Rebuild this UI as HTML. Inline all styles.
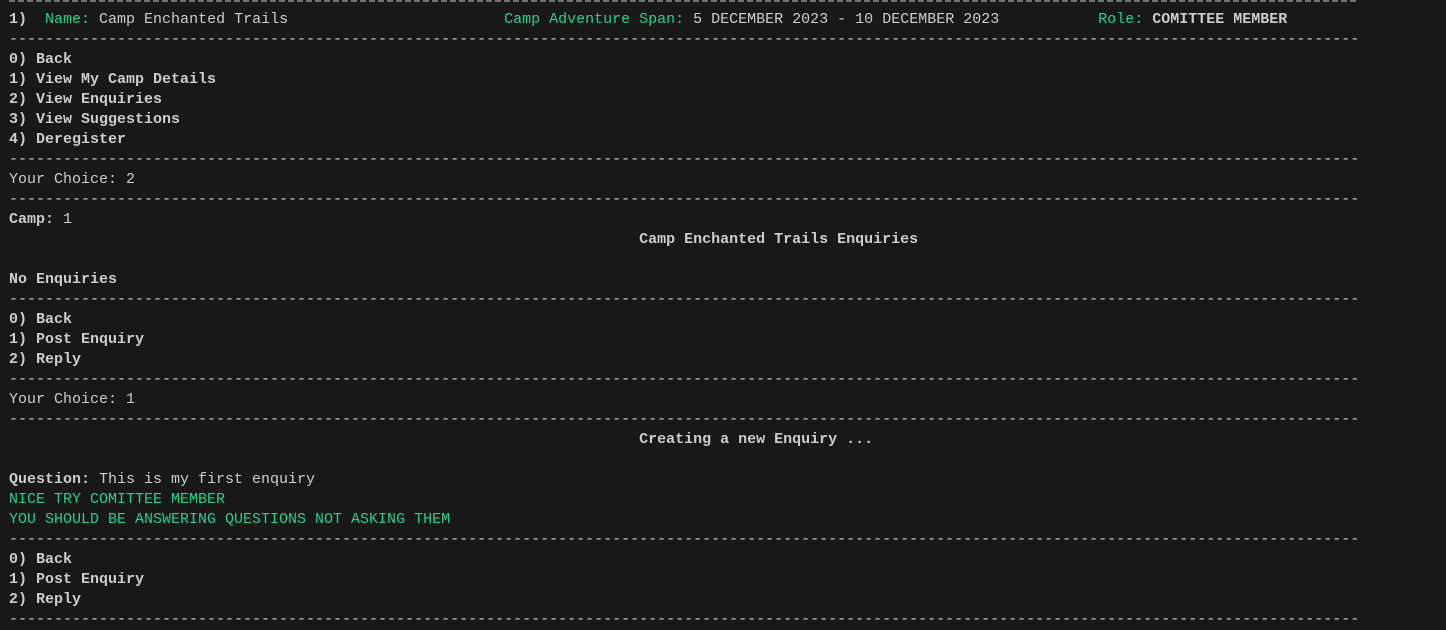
<!DOCTYPE html><html><head><style>
body{margin:0;background:#181818;width:1446px;height:627px;overflow:hidden;}
pre{margin:0;position:absolute;left:9px;top:-10px;font:15px/20px "Liberation Mono",monospace;color:#cccccc;}
b{font-weight:bold}.g{color:#23d18b}
.t{position:absolute;left:9px;top:0;height:2px;width:1349px;background:repeating-linear-gradient(90deg,#aaa 0 6px,transparent 6px 9px);opacity:.6}
</style></head><body><div class="t"></div><pre></pre>
<script>
var D='-'.repeat(150);
var line1='<b>1)</b>  <span class="g">Name:</span> Camp Enchanted Trails'+' '.repeat(55-'1)  Name: Camp Enchanted Trails'.length)
+'<span class="g">Camp Adventure Span:</span> 5 DECEMBER 2023 - 10 DECEMBER 2023';
var used=55+'Camp Adventure Span: 5 DECEMBER 2023 - 10 DECEMBER 2023'.length;
line1+=' '.repeat(121-used)+'<span class="g">Role:</span> <b>COMITTEE MEMBER</b>';
var L=['',line1,D,'<b>0) Back</b>','<b>1) View My Camp Details</b>','<b>2) View Enquiries</b>','<b>3) View Suggestions</b>','<b>4) Deregister</b>',D,'Your Choice: 2',D,'<b>Camp:</b> 1',' '.repeat(70)+'<b>Camp Enchanted Trails Enquiries</b>','','<b>No Enquiries</b>',D,'<b>0) Back</b>','<b>1) Post Enquiry</b>','<b>2) Reply</b>',D,'Your Choice: 1',D,' '.repeat(70)+'<b>Creating a new Enquiry ...</b>','','<b>Question:</b> This is my first enquiry','<span class="g">NICE TRY COMITTEE MEMBER</span>','<span class="g">YOU SHOULD BE ANSWERING QUESTIONS NOT ASKING THEM</span>',D,'<b>0) Back</b>','<b>1) Post Enquiry</b>','<b>2) Reply</b>',D];
document.querySelector('pre').innerHTML=L.join('\n');
</script></body></html>
